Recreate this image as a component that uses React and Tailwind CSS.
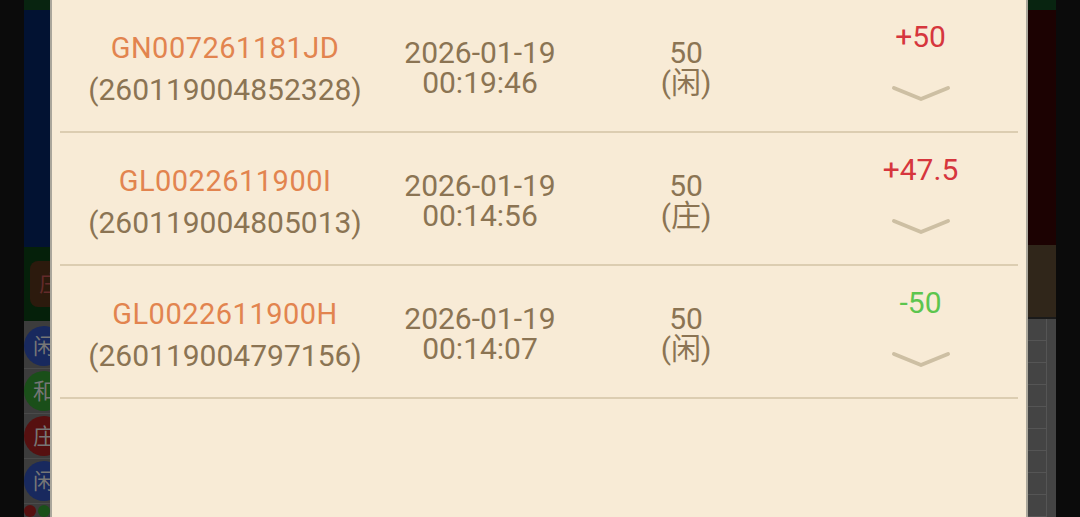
import React from 'react';

const records = [
  { id: 'GN007261181JD', no: '260119004852328', date: '2026-01-19', time: '00:19:46', bet: '50', side: '闲', result: '+50', win: true },
  { id: 'GL0022611900I', no: '260119004805013', date: '2026-01-19', time: '00:14:56', bet: '50', side: '庄', result: '+47.5', win: true },
  { id: 'GL0022611900H', no: '260119004797156', date: '2026-01-19', time: '00:14:07', bet: '50', side: '闲', result: '-50', win: false },
];

const beads = [
  { label: '闲', color: 'bg-[#18295e]' },
  { label: '和', color: 'bg-[#1a4f19]' },
  { label: '庄', color: 'bg-[#561010]' },
  { label: '闲', color: 'bg-[#18295e]' },
];

const Chevron = () => (
  <svg width="60" height="20" viewBox="0 0 60 20" fill="none">
    <path d="M3 5 L30 16 L57 5" stroke="#cdbfa3" strokeWidth="4" strokeLinecap="round" strokeLinejoin="round" />
  </svg>
);

const LeftStrip = () => (
  <div className="w-[26px] h-full flex flex-col overflow-hidden">
    <div className="h-[10px] bg-[#082410]" />
    <div className="h-[240px] bg-[#021232]" />
    <div className="h-[75px] bg-[#05200a] flex items-center pl-[6px]">
      <div className="w-[40px] h-[46px] shrink-0 rounded-lg bg-[#2c1a0d] flex items-center justify-center text-[22px] text-[#632a2a]">
        庄
      </div>
    </div>
    <div className="flex-1 bg-[#3c3c3c] flex flex-col pt-[3px]">
      {beads.map((b, i) => (
        <div key={i} className="h-[45px] border-b border-[#4a4a4a] flex items-center">
          <div className={`w-[40px] h-[40px] shrink-0 rounded-full ${b.color} flex items-center justify-center text-[22px] text-[#767676]`}>
            {b.label}
          </div>
        </div>
      ))}
      <div className="flex gap-[2px] pt-[1px]">
        <div className="w-[12px] h-[12px] shrink-0 rounded-full bg-[#561010]" />
        <div className="w-[12px] h-[12px] shrink-0 rounded-full bg-[#1a4f19]" />
      </div>
    </div>
  </div>
);

const RightStrip = () => (
  <div className="w-[28px] h-full flex flex-col overflow-hidden">
    <div className="h-[10px] bg-[#082410]" />
    <div className="h-[238px] bg-[#1c0202]" />
    <div className="h-[75px] bg-[#30261a] border-b-2 border-[#1a1a1a]" />
    <div className="flex-1 bg-[#444444] flex">
      <div className="w-[19px] border-r border-[#555555] flex flex-col">
        {Array.from({ length: 9 }).map((_, i) => (
          <div key={i} className="h-[22px] border-b border-[#555555]" />
        ))}
      </div>
      <div className="flex-1" />
    </div>
  </div>
);

export default function App() {
  return (
    <div className="w-[1080px] h-[517px] flex bg-[#0b0b0b] overflow-hidden" style={{ fontFamily: 'Roboto, "Noto Sans CJK SC", sans-serif' }}>
      <div className="w-[24px] shrink-0" />
      <LeftStrip />
      <div className="w-[978px] h-full shrink-0 bg-[#f8ebd6] border-x-2 border-[#aaa69b]">
        <div className="mx-[8px]">
          {records.map((r) => (
            <div key={r.no} className="h-[133px] border-b-2 border-[#dccdb1] grid grid-cols-[326px_184px_232px_1fr]">
              <div className="flex flex-col items-center justify-center pt-[6px] pl-[4px]">
                <div className="text-[29px] leading-[41px] tracking-[0.5px] text-[#e2844f]">{r.id}</div>
                <div className="text-[30px] leading-[41px] text-[#8b7453]">({r.no})</div>
              </div>
              <div className="flex flex-col items-center justify-center pt-[5px] pl-[4px] text-[30px] leading-[30px] text-[#8b7453]">
                <div>{r.date}</div>
                <div>{r.time}</div>
              </div>
              <div className="flex flex-col items-center justify-center pt-[5px] text-[30px] leading-[30px] text-[#8b7453]">
                <div>{r.bet}</div>
                <div>({r.side})</div>
              </div>
              <div className="flex flex-col items-center justify-center pl-[21px] pb-[6px]">
                <div className={`text-[30px] leading-[30px] ${r.win ? 'text-[#d6363d]' : 'text-[#5cc54e]'}`}>{r.result}</div>
                <div className="mt-[31px]">
                  <Chevron />
                </div>
              </div>
            </div>
          ))}
        </div>
      </div>
      <RightStrip />
      <div className="w-[24px] shrink-0" />
    </div>
  );
}
